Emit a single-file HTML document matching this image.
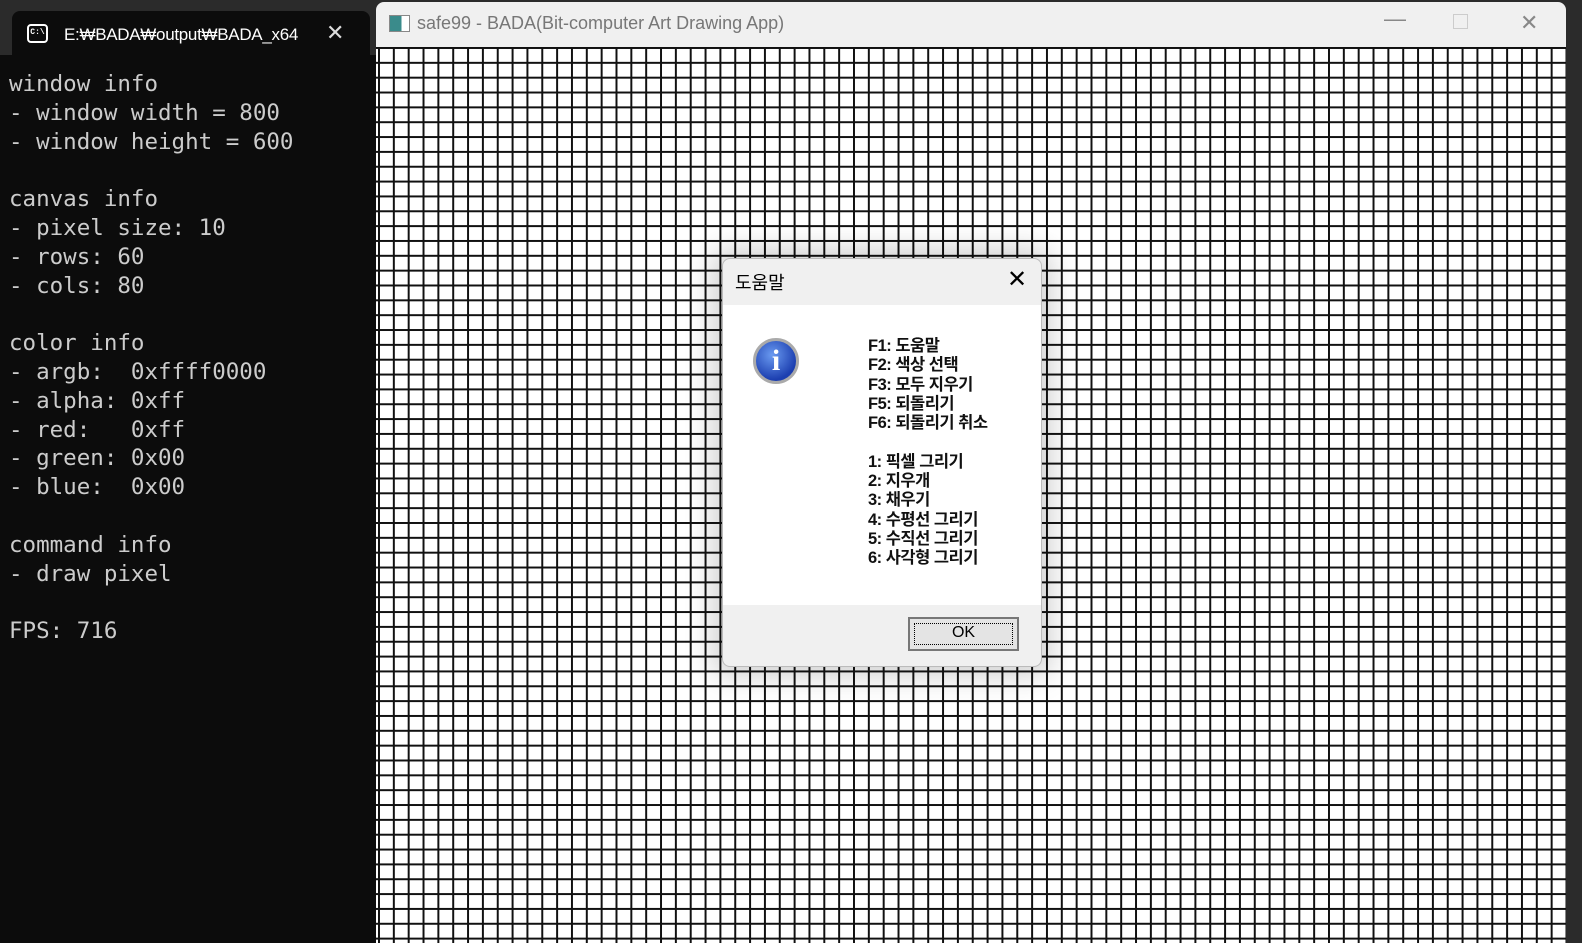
<!DOCTYPE html>
<html><head><meta charset="utf-8"><style>
*{margin:0;padding:0;box-sizing:border-box}
body{width:1582px;height:943px;background:#2b2b2b;position:relative;overflow:hidden;font-family:"Liberation Sans","Noto Sans CJK KR",sans-serif}
#term{position:absolute;left:0;top:55px;width:376px;height:888px;background:#0c0c0c}
#tab{position:absolute;left:12px;top:11px;width:358px;height:50px;background:#0c0c0c;border-radius:8px 8px 0 0;color:#fff;font-size:17px}
#tab .t{position:absolute;left:52px;top:14px;letter-spacing:-0.3px}
#tab .x{position:absolute;left:314px;top:9px;font-size:22px;color:#ddd}
#tab .ic{position:absolute;left:15px;top:13px;width:21px;height:19px;border:2px solid #fff;border-radius:4px;font-size:8px;font-family:"Liberation Mono",monospace;line-height:13px;text-align:center;font-weight:bold}
pre{position:absolute;left:9px;top:70px;font-family:"DejaVu Sans Mono","Liberation Mono",monospace;font-size:22.5px;line-height:28.8px;color:#cccccc}
#win{position:absolute;left:376px;top:2px;width:1190px;height:941px;background:#f0f0f0;border-radius:8px 8px 0 0;overflow:hidden}
#win .title{position:absolute;left:41px;top:11px;font-size:18px;color:#777}
#win .appic{position:absolute;left:13px;top:13px;width:21px;height:17px;border:1px solid #888;background:linear-gradient(90deg,#3a8b8b 60%,#fff 60%)}
#grid{position:absolute;left:0;top:45px;width:1190px;height:896px;background-color:#fff;
background-image:linear-gradient(90deg,#111 2px,transparent 2px),linear-gradient(#111 2px,transparent 2px);
background-size:14.85px 14.85px;background-position:2px 0}
.cb{position:absolute;top:8px;font-size:22px;color:#888}
#dlg{position:absolute;left:722px;top:258px;width:320px;height:409px;background:#f0f0f0;border:1px solid #bbb;border-radius:8px;box-shadow:0 0 28px 10px rgba(0,0,0,.18);overflow:hidden}
#dlg .h{position:absolute;left:12px;top:10px;font-size:18px;color:#000}
#dlg .cx{position:absolute;left:284px;top:6px;font-size:24px;font-weight:300}
#body{position:absolute;left:0;top:46px;width:320px;height:300px;background:#fff}
#info{position:absolute;left:30px;top:33px;width:46px;height:46px;border-radius:50%;background:radial-gradient(circle at 40% 35%,#6a9af0,#1c3fb0 70%);border:3px solid #aaa;color:#fff;font:bold 30px "Liberation Serif",serif;text-align:center;line-height:40px}
#txt{position:absolute;left:145px;top:32px;font-size:16.5px;line-height:19.3px;font-weight:bold;color:#111;letter-spacing:-0.5px}
#ok{position:absolute;left:185px;top:358px;width:111px;height:34px;border:2px solid #777;background:#e4e4e4;font-size:16px;text-align:center;line-height:28px}
#ok span{position:absolute;left:4px;top:4px;right:4px;bottom:4px;border:1px dotted #000}
</style></head><body>
<div id="term"></div>
<div id="tab"><div class="ic">C:\</div><div class="t">E:₩BADA₩output₩BADA_x64</div><div class="x">✕</div></div>
<pre>window info
- window width = 800
- window height = 600

canvas info
- pixel size: 10
- rows: 60
- cols: 80

color info
- argb:  0xffff0000
- alpha: 0xff
- red:   0xff
- green: 0x00
- blue:  0x00

command info
- draw pixel

FPS: 716</pre>
<div id="win"><div class="appic"></div><div class="title">safe99 - BADA(Bit-computer Art Drawing App)</div>
<div class="cb" style="left:1008px;top:4px">—</div>
<div class="cb" style="left:1077px;top:12px;width:15px;height:15px;border:1px solid #ccc"></div>
<div class="cb" style="left:1144px">✕</div>
<div id="grid"></div></div>
<div id="dlg"><div class="h">도움말</div><div class="cx">✕</div>
<div id="body"><div id="info">i</div><div id="txt">F1: 도움말<br>F2: 색상 선택<br>F3: 모두 지우기<br>F5: 되돌리기<br>F6: 되돌리기 취소<br><br>1: 픽셀 그리기<br>2: 지우개<br>3: 채우기<br>4: 수평선 그리기<br>5: 수직선 그리기<br>6: 사각형 그리기</div></div>
<div id="ok"><span></span>OK</div></div>
</body></html>
